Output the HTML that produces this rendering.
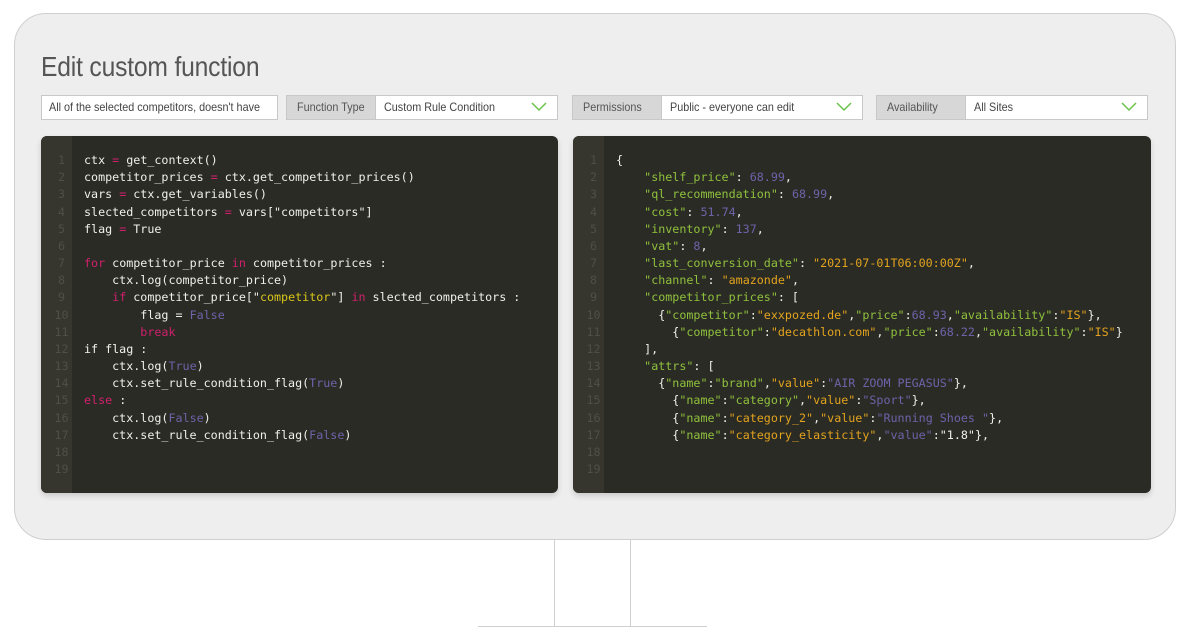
<!DOCTYPE html>
<html><head><meta charset="utf-8"><style>
*{box-sizing:border-box;margin:0;padding:0}
body{width:1200px;height:641px;background:#fff;position:relative;overflow:hidden;font-family:"Liberation Sans",sans-serif}
.mon{position:absolute;left:14px;top:13px;width:1162px;height:527px;background:#eeeeee;border:1px solid #cfcfcf;border-radius:32px}
.st{position:absolute;top:540px;width:1px;height:87px;background:#cfcfcf}
.base{position:absolute;left:478px;top:626px;width:229px;height:1px;background:#cfcfcf}
h1{position:absolute;left:41px;top:51px;font-weight:normal;font-size:28px;color:#555;transform:scaleX(.88);transform-origin:left;letter-spacing:-.2px;white-space:nowrap}
.in{position:absolute;top:95px;height:25px;background:#fff;border:1px solid #c8c8c8;font-size:12px;color:#444;line-height:23px;white-space:nowrap;overflow:hidden}
.in span{display:inline-block;transform:scaleX(.9);transform-origin:left}
.lab{position:absolute;left:0;top:0;bottom:0;background:#d7d7d7;color:#555;border-right:1px solid #c8c8c8;padding-left:10px}
.val{position:absolute;top:0;bottom:0;padding-left:8px}
.chk{position:absolute;right:10px;top:6px}
.code{position:absolute;top:136px;height:357px;background:#2b2b26;border-radius:6px;overflow:hidden;box-shadow:0 3px 6px rgba(0,0,0,.15)}
.gut{position:absolute;left:0;top:0;bottom:0;width:31px;background:#36362f}
pre{position:absolute;top:152px;font-family:"DejaVu Sans Mono",monospace;font-size:11.7px;line-height:17.17px;color:#f0f0ea}
.ln{color:#4f4f47;text-align:center;width:31px}
.k{color:#d0206c}.s{color:#d7c617}.p{color:#6e62a8}.g{color:#8fc13c}.o{color:#e2a31d}
</style></head><body>
<div class="mon"></div>
<div class="st" style="left:554px"></div><div class="st" style="left:630px"></div><div class="base"></div>
<h1>Edit custom function</h1>
<div class="in" style="left:41px;width:237px;padding-left:7px"><span>All of the selected competitors, doesn't have</span></div>
<div class="in" style="left:286px;width:272px"><div class="lab" style="width:89px"><span>Function Type</span></div><div class="val" style="left:89px"><span>Custom Rule Condition</span></div><svg class="chk" width="16" height="10"><path d="M1 1l7 7 7-7" fill="none" stroke="#6cc14a" stroke-width="1.5"/></svg></div>
<div class="in" style="left:572px;width:291px"><div class="lab" style="width:89px"><span>Permissions</span></div><div class="val" style="left:89px"><span>Public - everyone can edit</span></div><svg class="chk" width="16" height="10"><path d="M1 1l7 7 7-7" fill="none" stroke="#6cc14a" stroke-width="1.5"/></svg></div>
<div class="in" style="left:876px;width:272px"><div class="lab" style="width:89px"><span>Availability</span></div><div class="val" style="left:89px"><span>All Sites</span></div><svg class="chk" width="16" height="10"><path d="M1 1l7 7 7-7" fill="none" stroke="#6cc14a" stroke-width="1.5"/></svg></div>

<div class="code" style="left:41px;width:517px"><div class="gut"></div></div>
<div class="code" style="left:573px;width:578px"><div class="gut"></div></div>

<pre class="ln" style="left:46px">1
2
3
4
5
6
7
8
9
10
11
12
13
14
15
16
17
18
19</pre>
<pre style="left:84px">ctx <span class="k">=</span> get_context()
competitor_prices <span class="k">=</span> ctx.get_competitor_prices()
vars <span class="k">=</span> ctx.get_variables()
slected_competitors <span class="k">=</span> vars["competitors"]
flag <span class="k">=</span> True

<span class="k">for</span> competitor_price <span class="k">in</span> competitor_prices :
    ctx.log(competitor_price)
    <span class="k">if</span> competitor_price["<span class="s">competitor</span>"] <span class="k">in</span> slected_competitors :
        flag = <span class="p">False</span>
        <span class="k">break</span>
if flag :
    ctx.log(<span class="p">True</span>)
    ctx.set_rule_condition_flag(<span class="p">True</span>)
<span class="k">else</span> :
    ctx.log(<span class="p">False</span>)
    ctx.set_rule_condition_flag(<span class="p">False</span>)</pre>

<pre class="ln" style="left:578px">1
2
3
4
5
6
7
8
9
10
11
12
13
14
15
16
17
18
19</pre>
<pre style="left:616px">{
    <span class="g">"shelf_price"</span>: <span class="p">68.99</span>,
    <span class="g">"ql_recommendation"</span>: <span class="p">68.99</span>,
    <span class="g">"cost"</span>: <span class="p">51.74</span>,
    <span class="g">"inventory"</span>: <span class="p">137</span>,
    <span class="g">"vat"</span>: <span class="p">8</span>,
    <span class="g">"last_conversion_date"</span>: <span class="o">"2021-07-01T06:00:00Z"</span>,
    <span class="g">"channel"</span>: <span class="o">"amazonde"</span>,
    <span class="g">"competitor_prices"</span>: [
      {<span class="g">"competitor"</span>:<span class="o">"exxpozed.de"</span>,<span class="g">"price"</span>:<span class="p">68.93</span>,<span class="g">"availability"</span>:<span class="o">"IS"</span>},
        {<span class="g">"competitor"</span>:<span class="o">"decathlon.com"</span>,<span class="g">"price"</span>:<span class="p">68.22</span>,<span class="g">"availability"</span>:<span class="o">"IS"</span>}
    ],
    <span class="g">"attrs"</span>: [
      {<span class="g">"name"</span>:<span class="g">"brand"</span>,<span class="o">"value"</span>:<span class="p">"AIR ZOOM PEGASUS"</span>},
        {<span class="g">"name"</span>:<span class="g">"category"</span>,<span class="o">"value"</span>:<span class="p">"Sport"</span>},
        {<span class="g">"name"</span>:<span class="o">"category_2"</span>,<span class="o">"value"</span>:<span class="p">"Running Shoes "</span>},
        {<span class="g">"name"</span>:<span class="o">"category_elasticity"</span>,<span class="p">"value"</span>:"1.8"},</pre>
</body></html>
